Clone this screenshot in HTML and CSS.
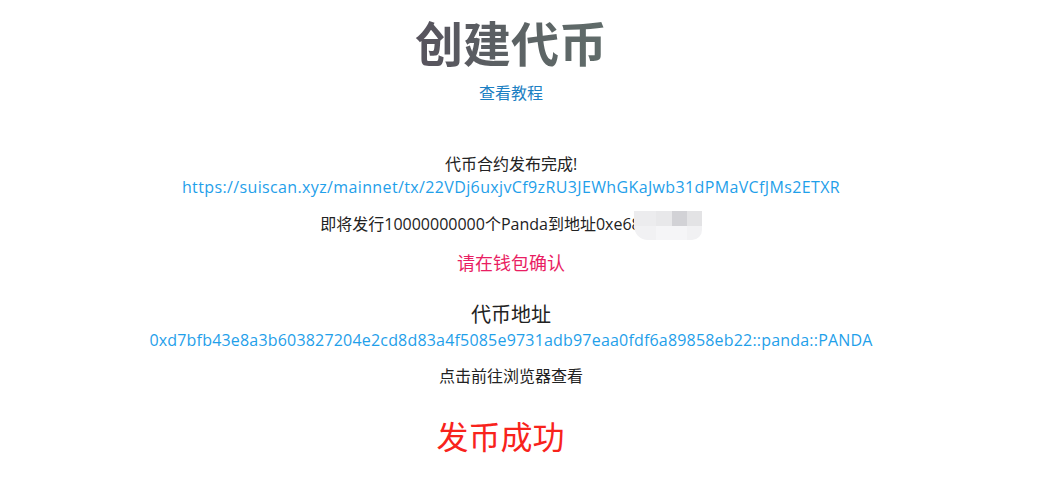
FILE: index.html
```html
<!DOCTYPE html>
<html lang="zh-CN">
<head>
<meta charset="utf-8">
<title>创建代币</title>
<link rel="stylesheet" href="styles.css">
</head>
<body>
<main class="page">
  <h1 class="title">创建代币</h1>
  <a class="tutorial" href="#">查看教程</a>

  <section class="status">
    <p class="line">代币合约发布完成!</p>
    <a class="line link url" href="#">https://suiscan.xyz/mainnet/tx/22VDj6uxjvCf9zRU3JEWhGKaJwb31dPMaVCfJMs2ETXR</a>
    <p class="line issue">即将发行10000000000个Panda到地址0xe68<span class="mosaic"><i class="c1"></i><i class="c2"></i><i class="c3"></i><i class="c4"></i><i class="c5"></i><i class="c6"></i><i class="c6"></i><i class="c5"></i></span></p>
    <p class="confirm">请在钱包确认</p>
  </section>

  <section class="address">
    <h2 class="addr-title">代币地址</h2>
    <a class="line link addr" href="#">0xd7bfb43e8a3b603827204e2cd8d83a4f5085e9731adb97eaa0fdf6a89858eb22::panda::PANDA</a>
    <p class="line view">点击前往浏览器查看</p>
  </section>

  <p class="success">发币成功</p>
</main>
</body>
</html>
```

FILE: styles.css
```css
html, body {
  margin: 0;
  padding: 0;
  background: #ffffff;
}

body {
  font-family: "Open Sans", "Noto Sans CJK SC", sans-serif;
  color: #222222;
  font-size: 16px;
}

.page {
  display: flex;
  flex-direction: column;
  align-items: center;
  text-align: center;
  padding-top: 13px;
  padding-right: 39px;
}

.title {
  margin: 0;
  font-family: "Noto Sans CJK SC", sans-serif;
  font-size: 48px;
  font-weight: 700;
  line-height: 56px;
  background: linear-gradient(90deg, #57535d 0%, #5c6264 50%, #606c6a 100%);
  -webkit-background-clip: text;
  background-clip: text;
  color: transparent;
}

.tutorial {
  margin-top: 11px;
  font-family: "Noto Sans CJK SC", sans-serif;
  font-size: 16px;
  line-height: 24px;
  color: #1b7fc3;
  text-decoration: none;
}

.status {
  display: flex;
  flex-direction: column;
  align-items: center;
  margin-top: 49px;
}

.line {
  margin: 0;
  font-size: 16px;
  line-height: 23px;
}

.link {
  color: #1fa0ea;
  text-decoration: none;
}

.url {
  letter-spacing: 0.37px;
}

.addr {
  letter-spacing: 0.19px;
  line-height: 24px;
}

.issue {
  margin-top: 13px;
  line-height: 24px;
}

.mosaic {
  display: inline-grid;
  grid-template-columns: 22px 16px 15px 15px;
  grid-template-rows: 15px 14px;
  width: 68px;
  height: 29px;
  margin-left: -7px;
  margin-top: -1px;
  margin-bottom: -6px;
  vertical-align: top;
  border-radius: 0 0 10px 14px;
  overflow: hidden;
}

.mosaic i {
  display: block;
}

.mosaic .c1 { background: #ececee; }
.mosaic .c2 { background: #e8e8ea; }
.mosaic .c3 { background: #d2d2d6; }
.mosaic .c4 { background: #e3e3e5; }
.mosaic .c5 { background: #f1f1f3; }
.mosaic .c6 { background: #f5f5f7; }

.confirm {
  margin: 14px 0 0;
  font-family: "Noto Sans CJK SC", sans-serif;
  font-size: 18px;
  line-height: 24px;
  color: #e91e63;
}

.address {
  display: flex;
  flex-direction: column;
  align-items: center;
  margin-top: 26px;
}

.addr-title {
  margin: 0;
  font-family: "Noto Sans CJK SC", sans-serif;
  font-size: 20px;
  font-weight: 400;
  line-height: 28px;
  color: #222222;
}

.view {
  margin-top: 12px;
  line-height: 24px;
}

.success {
  margin: 25px 21px 0 0;
  font-family: "Noto Sans CJK SC", sans-serif;
  font-size: 32px;
  line-height: 44px;
  color: #f8231c;
}
```
